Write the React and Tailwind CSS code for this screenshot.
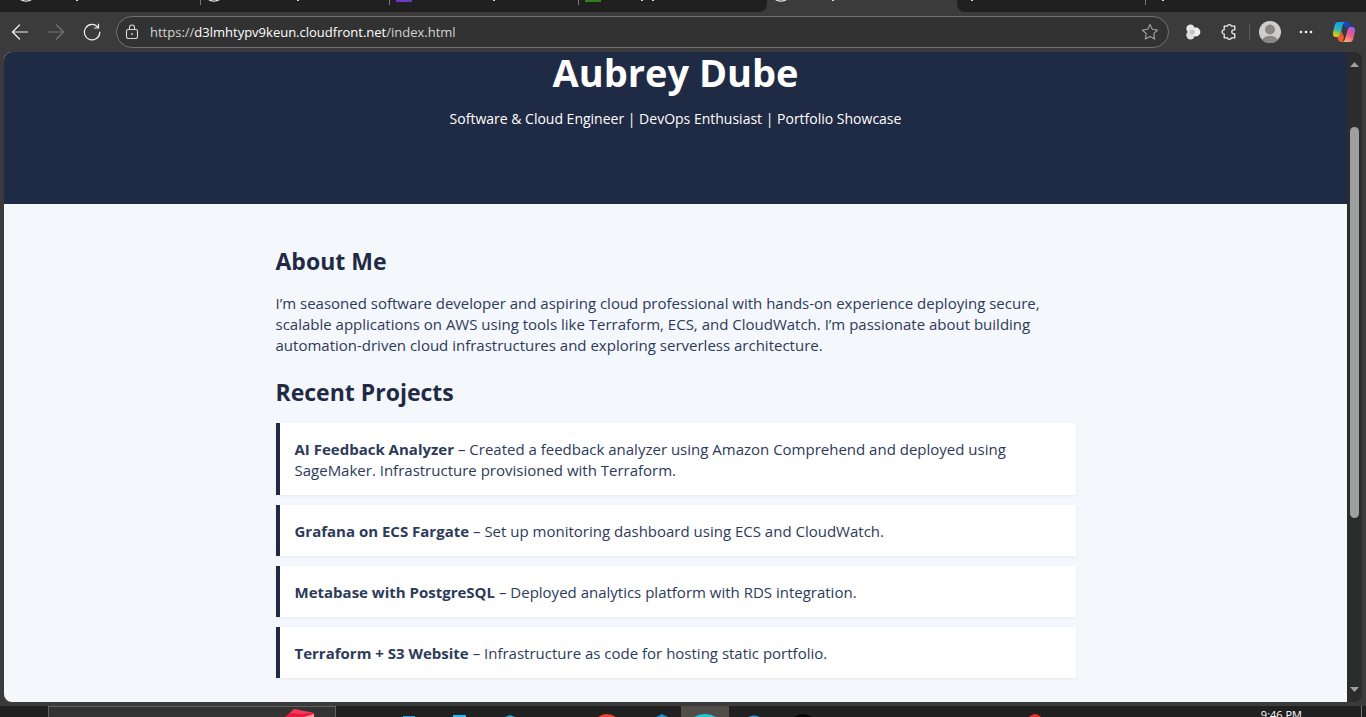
import React from "react";

const projects = [
  ["AI Feedback Analyzer", "Created a feedback analyzer using Amazon Comprehend and deployed using SageMaker. Infrastructure provisioned with Terraform."],
  ["Grafana on ECS Fargate", "Set up monitoring dashboard using ECS and CloudWatch."],
  ["Metabase with PostgreSQL", "Deployed analytics platform with RDS integration."],
  ["Terraform + S3 Website", "Infrastructure as code for hosting static portfolio."],
];

/* Lower edge of a round tab icon, plus the descenders of the tab's title */
function TabEdge({ globe, color, marks = [] }) {
  return (
    <svg width="180" height="12" aria-hidden="true" className="block">
      {globe && <path d="M20 0h3q3 1.200 6 0h3q-6 3.600-12 0Z" fill="#f3f3f3" />}
      {color && <rect x="19" y="0" width="16" height="2" fill={color} />}
      {marks.map((x) => (
        <rect key={x} x={x} y="0" width="2" height="1" fill="#dddddd" />
      ))}
    </svg>
  );
}

function TabStrip() {
  return (
    <div className="flex h-3 shrink-0 overflow-hidden bg-[#3b3b3b]">
      <div className="flex w-[767px] rounded-br-lg bg-[#202020]">
        <div className="w-[200px]"><TabEdge globe marks={[76]} /></div>
        <div className="w-[189px] bg-[linear-gradient(#777,#777)] bg-[length:1px_5px] bg-no-repeat"><div className="-ml-3"><TabEdge globe marks={[109]} /></div></div>
        <div className="w-[189px] bg-[linear-gradient(#777,#777)] bg-[length:1px_5px] bg-no-repeat"><div className="-ml-3"><TabEdge color="#6a3ac7" marks={[116]} /></div></div>
        <div className="flex-1 bg-[linear-gradient(#777,#777)] bg-[length:1px_5px] bg-no-repeat"><div className="-ml-3"><TabEdge color="#2c8118" marks={[75, 86]} /></div></div>
      </div>
      <div className="w-[190px]"><div className="-ml-3"><TabEdge globe marks={[77]} /></div></div>
      <div className="flex flex-1 rounded-bl-lg bg-[#202020]">
        <div className="w-[188px]"><div className="-ml-3"><TabEdge marks={[26]} /></div></div>
        <div className="flex-1 bg-[linear-gradient(#777,#777)] bg-[length:1px_5px] bg-no-repeat"><div className="-ml-3"><TabEdge marks={[29]} /></div></div>
      </div>
    </div>
  );
}

function Toolbar() {
  return (
    <div className="flex h-10 shrink-0 items-center bg-[#3b3b3b]">
      <button aria-label="Back" className="flex w-10 justify-center">
        <svg width="18" height="16" viewBox="0 0 18 16" fill="none" stroke="#f1f1f1" strokeWidth="1.2" strokeLinecap="round" strokeLinejoin="round"><path d="M16.500 8H1.500M8.500 1 1.500 8l7 7" /></svg>
      </button>
      <button aria-label="Forward" className="flex w-8 justify-center">
        <svg width="18" height="16" viewBox="0 0 18 16" fill="none" stroke="#747474" strokeWidth="1.2" strokeLinecap="round" strokeLinejoin="round"><path d="M1.500 8h15M9.500 1l7 7-7 7" /></svg>
      </button>
      <button aria-label="Refresh" className="flex w-10 justify-center">
        <svg width="18" height="18" viewBox="0 0 18 18" fill="none" stroke="#f1f1f1" strokeWidth="1.2" strokeLinecap="round" strokeLinejoin="round"><path d="M16.8 9A7.7 7.7 0 1 1 15 4.2M15.5 1.2V5H11.5" /></svg>
      </button>
      <div className="ml-1 flex h-8 flex-1 items-center rounded-full border border-[#707070] bg-[#323232] pl-2 pr-2">
        <svg width="14" height="16" viewBox="0 0 14 16" fill="none" stroke="#d8d8d8" strokeWidth="1.1"><rect x="1.500" y="5.500" width="11" height="9" rx="1.7" /><path d="M4.500 5.500V3.500a2.500 2.500 0 0 1 5 0v2" /><circle cx="7" cy="10" r=".9" fill="#d8d8d8" stroke="none" /></svg>
        <a href="#top" className="ml-[11px] flex-1 font-['Open_Sans',sans-serif] text-[13px] leading-5 text-[#d2d2d2]">https://<span className="font-medium text-white">d3lmhtypv9keun.cloudfront.net</span>/index.html</a>
        <button aria-label="Add to favorites" className="flex w-5 justify-center">
          <svg width="18" height="18" viewBox="0 0 18 18" fill="none" stroke="#a3a3a3" strokeWidth="1.1" strokeLinejoin="round"><path d="m9 1.4 2.3 4.9 5.3.7-3.9 3.7 1 5.4L9 13.5l-4.7 2.6 1-5.4L1.400 7l5.300-.7Z" /></svg>
        </button>
      </div>
      <button aria-label="Extension" className="ml-3 flex w-6 justify-center">
        <svg width="16" height="16" viewBox="0 0 16 16"><circle cx="5.500" cy="4.800" r="4.200" fill="#e6e6e6" /><circle cx="5.500" cy="11.200" r="4.200" fill="#dedede" /><circle cx="11" cy="8" r="4.400" fill="#f0f0f0" /><circle cx="7.300" cy="8" r="2.600" fill="#c4c4c4" /></svg>
      </button>
      <button aria-label="Extensions" className="ml-3 flex w-6 justify-center">
        <svg width="16" height="18" viewBox="0 0 16 18" fill="none" stroke="#eeeeee" strokeWidth="1.300" strokeLinejoin="round"><path d="M3.200 3.200h3.100a2.200 2.200 0 0 1 4.200 0h3.300v3.600h-.9a2.100 2.100 0 0 0 0 4.200h.9v3.800h-3.300a2.200 2.200 0 0 1-4.200 0H3.200V11a2.100 2.100 0 0 1 0-4.200Z" /></svg>
      </button>
      <div className="ml-2 h-4 w-px bg-[#5c5c5c]" />
      <button aria-label="Profile" className="ml-2 flex w-6 justify-center">
        <svg width="22" height="22" viewBox="0 0 22 22"><defs><clipPath id="avatar"><circle cx="11" cy="11" r="11" /></clipPath></defs><g clipPath="url(#avatar)"><rect width="22" height="22" fill="#d0cecb" /><circle cx="11" cy="8.500" r="5" fill="#8a8683" /><ellipse cx="11" cy="20" rx="8" ry="5.300" fill="#8a8683" /></g></svg>
      </button>
      <button aria-label="Settings and more" className="ml-3 flex w-6 justify-center">
        <svg width="14" height="4"><g fill="#f1f1f1"><circle cx="2" cy="2" r="1.300" /><circle cx="7" cy="2" r="1.300" /><circle cx="12" cy="2" r="1.300" /></g></svg>
      </button>
      <button aria-label="Copilot" className="ml-[14px] mr-2.5 flex w-6 justify-center">
        <svg width="22" height="20" viewBox="0 0 22 20" className="shrink-0">
          <defs>
            <linearGradient id="cool" x1="0.500" y1="0" x2="0.200" y2="1"><stop offset="0" stopColor="#189cea" /><stop offset=".5" stopColor="#2cb7b5" /><stop offset=".75" stopColor="#a5c63c" /><stop offset="1" stopColor="#ffd000" /></linearGradient>
            <linearGradient id="warm" x1="0.700" y1="0" x2="0.300" y2="1"><stop offset="0" stopColor="#a65de5" /><stop offset=".5" stopColor="#ef5688" /><stop offset="1" stopColor="#ffac6b" /></linearGradient>
          </defs>
          <path d="M11 0h4q2 0 2.700 2.500L18.500 5H15q-2 0-2.700 2L11 3Z" fill="#1746b8" />
          <path d="M5 0h7q-1.600.8-2.200 3L7.500 12Q6.700 15 4.500 15H3Q0 15 0 12 0 10 .8 7l1-4Q2.600 0 5 0Z" fill="url(#cool)" />
          <path d="M4 15q2.500-.3 3.300-2.500L8.300 9l2.700 6-1.400 5H8q-2 0-2.700-2.300Z" fill="#ef5930" />
          <path d="M17 5h2q3 0 3 3 0 2-.8 5l-1 4q-.8 3-3.200 3H9.500q2-.7 2.600-3l2.400-9q.8-3 2.500-3Z" fill="url(#warm)" />
        </svg>
      </button>
    </div>
  );
}

function Portfolio() {
  return (
    <main id="top" className="min-w-0 flex-1 overflow-hidden rounded-l-lg bg-[#f4f7fc] font-['Open_Sans',sans-serif] text-[15px] leading-[21px] text-[#2d3a5a]">
      <header className="bg-[#1f2a44] pb-[75px] text-center text-white">
        <h1 className="text-[38px] font-bold leading-10">Aubrey Dube</h1>
        <p className="pt-4 text-[14px]">Software &amp; Cloud Engineer | DevOps Enthusiast | Portfolio Showcase</p>
      </header>
      <div className="mx-auto max-w-[800px] pt-[41px]">
        <section>
          <h2 className="text-[23px] font-bold leading-8 text-[#1f2a44]">About Me</h2>
          <p className="mt-4">I’m seasoned software developer and aspiring cloud professional with hands-on experience deploying secure, scalable applications on AWS using tools like Terraform, ECS, and CloudWatch. I’m passionate about building automation-driven cloud infrastructures and exploring serverless architecture.</p>
        </section>
        <section className="mt-5">
          <h2 className="text-[23px] font-bold leading-8 text-[#1f2a44]">Recent Projects</h2>
          <ul className="mt-[15px] flex flex-col gap-2.5">
            {projects.map(([name, text]) => (
              <li key={name} className="border-l-4 border-[#1f2a44] bg-white px-[15px] pb-[14px] pt-4 shadow-[0_1px_3px_rgba(0,0,0,0.06)]">
                <strong>{name}</strong> – {text}
              </li>
            ))}
          </ul>
        </section>
      </div>
    </main>
  );
}

function Scrollbar() {
  return (
    <div className="flex w-[15px] flex-col items-center rounded-r-lg bg-[#2c2c2c] py-[10px]" aria-hidden="true">
      <svg width="9" height="5"><path d="M4.500 0 9 5H0Z" fill="#a0a0a0" /></svg>
      <div className="mt-[60px] w-[9px] grow-[391] rounded-full bg-[#9f9f9f]" />
      <div className="grow-[169]" />
      <svg width="9" height="5"><path d="M4.500 5 9 0H0Z" fill="#a0a0a0" /></svg>
    </div>
  );
}

function Taskbar() {
  return (
    <div className="flex h-[11px] shrink-0 overflow-hidden bg-[#202020]">
      <div className="ml-12 flex w-[288px] justify-end border border-b-0 border-[#606060] bg-[#333333] pr-5">
        <svg width="30" height="10" aria-hidden="true"><path d="m0 10 9-8 20 4v4Z" fill="#e51c3f" /><path d="m9 2 20 4-12 1-12-1Z" fill="#f23a55" /><path d="m19 10 10-3v3Z" fill="#ff9b9b" /></svg>
      </div>
      <svg width="345" height="11" aria-hidden="true">
        <rect x="67" y="10" width="12" height="1" fill="#18a8ee" />
        <path d="M117 11V9h13v2Z" fill="#21b9f2" />
        <path d="m169 11 5-2 5 2Z" fill="#22a3dc" />
        <path d="M262 11q8.500-6 18 0Z" fill="#ef4436" />
        <path d="m320 11 6-3 6 3Z" fill="#168ed6" />
      </svg>
      <div className="flex w-12 justify-center bg-[#514e4a]">
        <svg width="24" height="11" aria-hidden="true"><path d="M1 11q11-6 22 0Z" fill="#25c6d9" /></svg>
      </div>
      <svg width="490" height="11" aria-hidden="true" className="min-w-0">
        <path d="M19 11q6-3 12 0Z" fill="#23a4dc" />
        <path d="M65 11q9-6 18 0Z" fill="#050505" />
        <path d="M300 11q6-6 12 0Z" fill="#e33424" />
      </svg>
      <time className="ml-auto mr-[59px] whitespace-nowrap pt-[2px] font-['Open_Sans',sans-serif] text-[11px] font-medium leading-[14px] text-white">9:46 PM</time>
      <div className="mr-1 w-px bg-[#777777]" />
    </div>
  );
}

export default function App() {
  return (
    <div className="flex h-screen flex-col overflow-hidden bg-[#3b3b3b]">
      <TabStrip />
      <Toolbar />
      <div className="flex min-h-0 flex-1 px-1 pb-1">
        <Portfolio />
        <Scrollbar />
      </div>
      <Taskbar />
    </div>
  );
}
